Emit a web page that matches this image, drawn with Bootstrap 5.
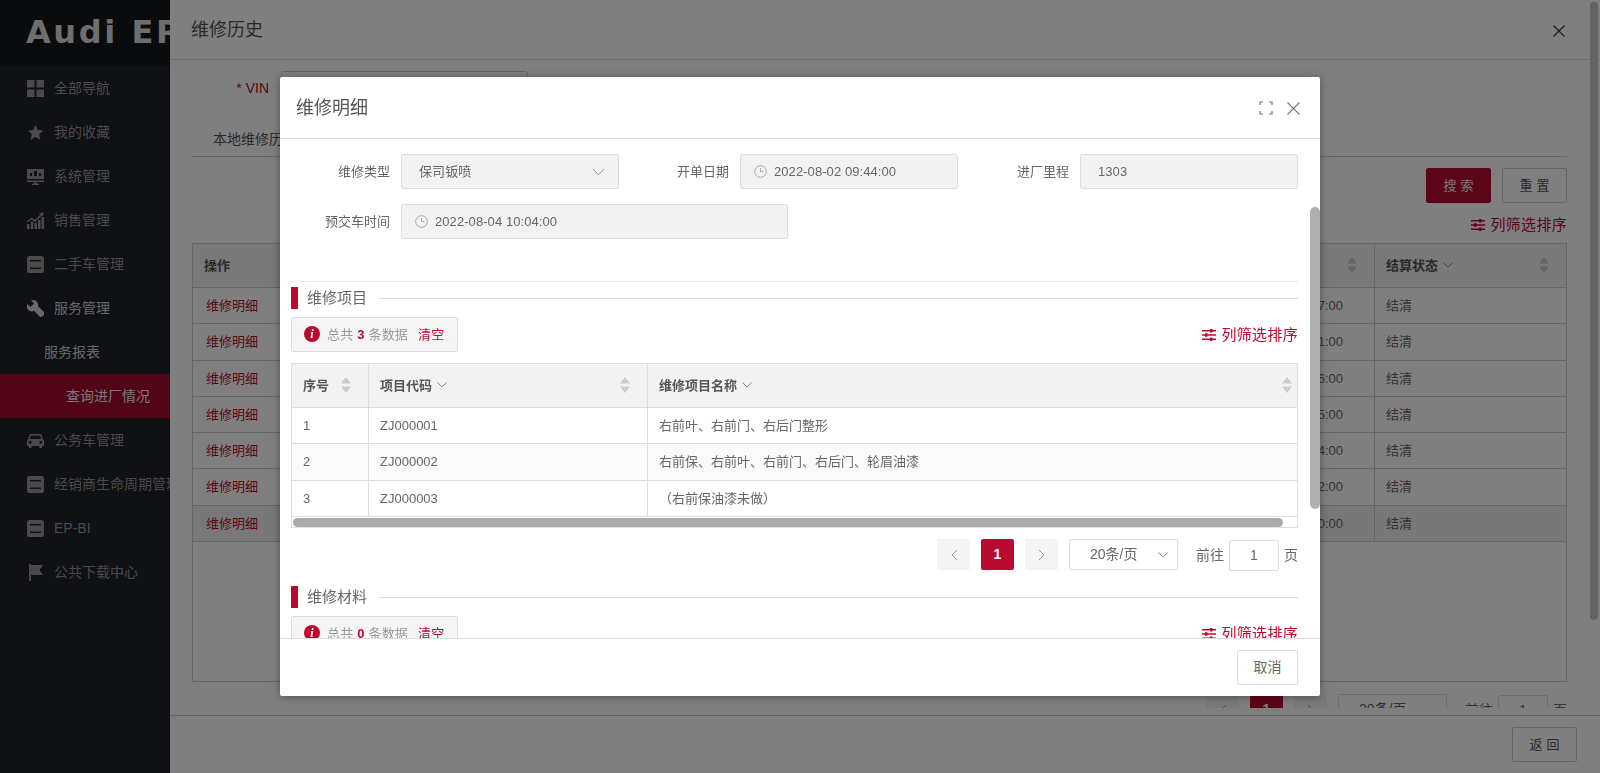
<!DOCTYPE html>
<html lang="zh-CN">
<head>
  <meta charset="UTF-8">
  <title>维修明细</title>
  <link href="https://cdn.jsdelivr.net/npm/bootstrap@5.3.0/dist/css/bootstrap.min.css" rel="stylesheet">
  <style>
    html, body { height: 100%; overflow: hidden; }
    body { font-family: "Liberation Sans", "Noto Sans CJK SC", sans-serif; font-size: 13px; color: #666; background: #fff; }

    /* page behind the mask */
    .side-bar { width: 170px; flex: none; background: #1e2228; color: #959595; overflow: hidden; white-space: nowrap; font-size: 14px; }
    .side-logo { height: 66px; background: #14161a; color: #dcdcdc; font-family: "DejaVu Sans", sans-serif; font-weight: 700; font-size: 32px; letter-spacing: 2.6px; padding: 13px 0 0 26px; line-height: 38px; }
    .side-item { height: 44px; padding-left: 27px; display: flex; align-items: center; gap: 10px; }
    .side-item svg { width: 17px; height: 17px; flex: none; fill: #959595; }
    .side-open { color: #d0d0d0; }
    .side-open svg { fill: #d0d0d0; }
    .side-sub { height: 44px; padding-left: 44px; display: flex; align-items: center; color: #d0d0d0; }
    .side-active { height: 44px; padding-left: 66px; display: flex; align-items: center; background: #a20a2c; color: #f0f0f0; }

    .drawer-pane { min-width: 0; }
    .drawer-head { height: 60px; flex: none; border-bottom: 1px solid #ddd; padding: 2px 35px 0 21px; font-size: 18px; color: #555; }
    .drawer-body { padding: 11px 33px 0 22px; overflow: hidden; min-height: 0; }
    .vin-label { width: 77px; text-align: right; color: #bb0a30; font-size: 14px; }
    .vin-input { width: 247px; height: 34px; margin-left: 12px; border: 1px solid #ccc; border-radius: 3px; background: #fff; }
    .tab-strip { height: 52px; border-bottom: 1px solid #ccc; padding: 24px 0 0 21px; font-size: 14px; line-height: 20px; color: #555; }
    .act-row { margin-top: 11px; }
    .act-btn { height: 35px; width: 65px; border-radius: 2px; font-size: 13px; letter-spacing: 4px; padding: 0 0 0 4px; }
    .act-red { background: #bb0a30; color: #eee; border: 1px solid #bb0a30; margin-right: 3px; }
    .act-plain { background: #fff; color: #555; border: 1px solid #ccc; }
    .col-filter { color: #bb0a30; font-size: 15px; letter-spacing: .3px; line-height: 20px; white-space: nowrap; }
    .col-filter svg { width: 14px; height: 12px; margin-right: 5px; vertical-align: -1px; }
    .back-box { height: 439px; flex: none; border: 1px solid #ccc; border-top: 0; margin-top: 8px; }
    .grid-table { table-layout: fixed; margin: 0 -1px; border-collapse: collapse; width: calc(100% + 2px); font-size: 13px; }
    .grid-table > :not(caption) > * > * { padding: 0 11px; vertical-align: middle; border: 1px solid #ddd; color: #666; background: #fff; box-shadow: none; white-space: nowrap; overflow: hidden; }
    .grid-table thead th { background: #f2f2f2; color: #555; font-weight: 700; position: relative; height: 44px; }
    .grid-table tbody tr { height: 36px; }
    .grid-table tbody tr.row-tall { height: 37px; }
    .grid-table tbody tr.row-stripe td { background: #fafafa; }
    .grid-table tbody tr.row-hover td { background: #f0f0f0; }
    .grid-back > :not(caption) > * > * { border-color: #ccc; }
    .grid-back a { color: #bb0a30; text-decoration: none; }
    .grid-back td:first-child { padding-left: 13px; }
    .grid-back td.time-cell { padding-right: 31px; text-align: right; }
    .sort-mark { position: absolute; top: 13px; right: 17px; width: 10px; height: 16px; fill: #ccc; }
    .sort-end { right: 5px; }
    .drop-mark { width: 10px; height: 6px; margin-left: 1px; vertical-align: 2px; stroke: #888; fill: none; }
    .back-pager { height: 14px; flex: none; margin-top: 12px; overflow: hidden; }
    .drawer-foot { height: 58px; flex: none; border-top: 1px solid #ccc; padding: 0 23px 0 0; }

    .drawer-bar { position: absolute; top: 2px; right: 2px; width: 8px; height: 618px; background: #c4c4c4; border-radius: 4px; }

    /* dialog on top of the mask */
    .detail-modal { position: absolute; left: 280px; top: 77px; width: 1040px; height: 619px; z-index: 1060; background: #fff; border: 0; border-radius: 2px; box-shadow: 0 1px 10px rgba(0,0,0,.35); color: #666; }
    .detail-head { height: 62px; flex: none; padding: 1px 20px 0 16px; border-bottom: 1px solid #ddd; border-radius: 0; font-size: 18px; color: #555; }
    .head-tools { gap: 14px; }
    .detail-body { flex: 1 1 auto; height: 499px; padding: 15px 22px 0 11px; overflow: hidden; position: relative; }
    .detail-foot { height: 58px; flex: none; padding: 0 22px 0 0; border-top: 1px solid #ddd; border-radius: 0; justify-content: flex-end; margin: 0; }
    .detail-foot > * { margin: 0; }
    .cancel-btn { width: 61px; height: 35px; padding: 0; background: #fff; border: 1px solid #ddd; border-radius: 2px; color: #666; font-size: 14px; }
    .head-icon { stroke: #777; fill: none; }

    .field-grid { display: grid; grid-template-columns: 110px 218px 121px 218px 122px 218px; row-gap: 15px; align-items: center; }
    .field-label { padding-right: 11px; text-align: right; color: #666; }
    .field-box { height: 35px; display: flex; align-items: center; padding-left: 17px; background: #f2f2f2; border: 1px solid #ddd; border-radius: 2px; color: #666; white-space: nowrap; letter-spacing: .07px; }
    .field-date { padding-left: 13px; gap: 7px; }
    .field-wide { grid-column: span 3; width: 387px; }
    .clock-mark { width: 13px; height: 13px; stroke: #aaa; fill: none; flex: none; }
    .field-select { justify-content: space-between; padding-right: 13px; }
    .chev-mark { width: 13px; height: 8px; stroke: #999; fill: none; }
    .top-rule { margin-top: 42px; border-top: 1px solid #e8e8e8; }
    .sect-head { height: 22px; margin-top: 5px; display: flex; align-items: center; font-size: 15px; color: #666; }
    .sect-head::before { content: ""; width: 7px; height: 22px; background: #bb0a30; margin-right: 9px; }
    .sect-line { flex: 1; margin-left: 12px; border-top: 1px solid #ddd; }
    .sect-next { margin-top: 15px; }
    .tool-row { margin-top: 8px; height: 34px; }
    .tool-row .col-filter { padding-top: 2px; }
    .info-box { width: 167px; height: 35px; padding-left: 12px; background: #f5f5f5; border: 1px solid #ddd; border-radius: 2px; color: #999; gap: 7px; white-space: nowrap; letter-spacing: .2px; }
    .info-box span { padding-top: 2px; }
    .info-box b { color: #bb0a30; }
    .info-box a { color: #bb0a30; text-decoration: none; margin-left: 10px; }
    .info-mark { width: 16px; height: 16px; flex: none; }
    .info-mark text { font-family: "Liberation Serif", serif; font-style: italic; font-weight: 700; font-size: 12px; fill: #fff; }
    .table-frame { height: 165px; margin-top: 12px; border: 1px solid #ddd; border-top: 0; position: relative; }
    .table-thumb { position: absolute; left: 1px; bottom: 0; width: 990px; height: 9px; background: #aaa; border-radius: 5px; }
    .pager-row { margin-top: 11px; height: 32px; }
    .pg-btn { width: 33px; height: 31px; border: 0; border-radius: 2px; background: #f4f4f4; padding: 0; margin-right: 11px; display: flex; align-items: center; justify-content: center; }
    .pg-btn svg { width: 8px; height: 12px; stroke: #999; fill: none; }
    .pg-on { background: #bb0a30; color: #fff; font-weight: 700; font-size: 14px; }
    .pg-size { width: 109px; height: 31px; border: 1px solid #ddd; border-radius: 2px; padding: 0 9px 0 20px; font-size: 14px; }
    .pg-goto { margin-left: 18px; font-size: 14px; gap: 5px; }
    .pg-num { width: 50px; height: 31px; border: 1px solid #ddd; border-radius: 2px; padding: 0; text-align: center; font-size: 14px; color: #666; }
    .body-bar { position: absolute; top: 68px; right: 0; width: 10px; height: 302px; background: #b0b0b0; border-radius: 5px; }
  </style>
</head>
<body>
  <svg width="0" height="0" class="d-block position-absolute">
    <symbol id="i-sort" viewBox="0 0 10 16"><path d="M5 0l5 6.500H0zM5 16l5-6.500H0z"/></symbol>
    <symbol id="i-drop" viewBox="0 0 10 6"><path d="M.5.5L5 5 9.500.5"/></symbol>
    <symbol id="i-clock" viewBox="0 0 13 13"><circle cx="6.500" cy="6.500" r="5.800"/><path d="M6.500 3v3.700h3"/></symbol>
    <symbol id="i-sliders" viewBox="0 0 14 12"><path fill="#bb0a30" d="M0 1h14v1.500H0zM0 5.300h14v1.500H0zM0 9.500h14V11H0zM8 0h2.500v3.500H8zM3 4.300h2.500v3.500H3zM8 8.500h2.500V12H8z"/></symbol>
    <symbol id="i-note" viewBox="0 0 17 17"><path fill-rule="evenodd" d="M2.500 0h12A2.500 2.500 0 0 1 17 2.500v12a2.500 2.500 0 0 1-2.500 2.500h-12A2.500 2.500 0 0 1 0 14.500v-12A2.500 2.500 0 0 1 2.500 0zM3 4v1.500h11V4zM3 11.500V13h11v-1.500z"/></symbol>
  </svg>

  <div class="d-flex h-100 position-relative">
    <aside class="side-bar">
      <div class="side-logo">Audi EP</div>
      <div class="side-item"><svg viewBox="0 0 17 17"><path d="M0 0h7.500v7.500H0zM9.500 0H17v7.500H9.500zM0 9.500h7.500V17H0zM9.500 9.500H17V17H9.500z"/></svg>全部导航</div>
      <div class="side-item"><svg viewBox="0 0 17 17"><path d="M8.500 1l2.300 5 5.400.6-4 3.700 1.100 5.400-4.800-2.700-4.800 2.700 1.100-5.400-4-3.700 5.400-.6z"/></svg>我的收藏</div>
      <div class="side-item"><svg viewBox="0 0 17 17"><path fill-rule="evenodd" d="M0 1h17v10H0zM3 8h2V5H3zM7 8h3V3H7zM12 8h2V5h-2zM0 12.500h17V14h-7.500v1.500H12V17H5v-1.500h2.500V14H0z"/></svg>系统管理</div>
      <div class="side-item"><svg viewBox="0 0 17 17"><path d="M0 12h2.500v5H0zM3.800 9.500h2.500V17H3.800zM7.500 11h2.500v6H7.500zM11 8h2.500v9H11zM14.500 5H17v12h-2.500zM0 9.500l4.500-4 3.500 2.500 5.500-5.500-1.500-1L16.500 0l-.2 4.500-1.300-1-7 6.500-3.500-2.500L.7 10.500z"/></svg>销售管理</div>
      <div class="side-item"><svg><use href="#i-note"/></svg>二手车管理</div>
      <div class="side-item side-open"><svg viewBox="0 0 17 17"><path transform="matrix(-1 0 0 1 17 0)" d="M11 0a5 5 0 0 0-5 6.300L.5 11.500a2.800 2.800 0 0 0 0 3.900l.6.600a2.800 2.800 0 0 0 3.900 0l5-5.200A5 5 0 0 0 16.700 4l-3.200 3L10 3.600 13 .5A5 5 0 0 0 11 0z"/></svg>服务管理</div>
      <div class="side-sub">服务报表</div>
      <div class="side-active">查询进厂情况</div>
      <div class="side-item"><svg viewBox="0 0 17 17"><path fill-rule="evenodd" d="M3 2h11l2 5.500c.7.400 1 1 1 1.700V14h-2v2h-2.500v-2h-8v2H2v-2H0V9.200c0-.7.300-1.300 1-1.700zM4 3.500L2.800 7h11.400L13 3.500zM3.200 8.800a1.500 1.500 0 1 0 0 3 1.500 1.500 0 0 0 0-3zM13.800 8.800a1.500 1.500 0 1 0 0 3 1.500 1.500 0 0 0 0-3z"/></svg>公务车管理</div>
      <div class="side-item"><svg><use href="#i-note"/></svg>经销商生命周期管理</div>
      <div class="side-item"><svg><use href="#i-note"/></svg>EP-BI</div>
      <div class="side-item"><svg viewBox="0 0 17 17"><path d="M2 0h2v17H2zM4 1h12l-3.500 5 3.500 5H4z"/></svg>公共下载中心</div>
    </aside>

    <main class="drawer-pane flex-grow-1 d-flex flex-column">
      <header class="drawer-head d-flex align-items-center justify-content-between">
        <span>维修历史</span>
        <svg width="12" height="12" viewBox="0 0 12 12" stroke="#333" stroke-width="1.100"><path d="M.5.5l11 11M11.500.5l-11 11"/></svg>
      </header>
      <div class="drawer-body flex-grow-1 d-flex flex-column">
        <div class="d-flex align-items-center">
          <span class="vin-label">* VIN</span>
          <div class="vin-input"></div>
        </div>
        <div class="tab-strip">本地维修历史</div>
        <div class="act-row d-flex justify-content-end gap-2">
          <button class="act-btn act-red" type="button">搜索</button>
          <button class="act-btn act-plain" type="button">重置</button>
        </div>
        <div class="col-filter text-end mt-2 pt-1"><svg><use href="#i-sliders"/></svg>列筛选排序</div>
        <div class="back-box">
          <table class="grid-table grid-back">
            <colgroup><col style="width:110px"><col><col style="width:192px"></colgroup>
            <thead>
              <tr><th>操作</th><th><svg class="sort-mark"><use href="#i-sort"/></svg></th><th>结算状态 <svg class="drop-mark"><use href="#i-drop"/></svg><svg class="sort-mark"><use href="#i-sort"/></svg></th></tr>
            </thead>
            <tbody>
              <tr><td><a href="#">维修明细</a></td><td class="time-cell">17:00</td><td>结清</td></tr>
              <tr class="row-tall"><td><a href="#">维修明细</a></td><td class="time-cell">11:00</td><td>结清</td></tr>
              <tr><td><a href="#">维修明细</a></td><td class="time-cell">16:00</td><td>结清</td></tr>
              <tr><td><a href="#">维修明细</a></td><td class="time-cell">15:00</td><td>结清</td></tr>
              <tr><td><a href="#">维修明细</a></td><td class="time-cell">14:00</td><td>结清</td></tr>
              <tr class="row-tall"><td><a href="#">维修明细</a></td><td class="time-cell">12:00</td><td>结清</td></tr>
              <tr class="row-hover"><td><a href="#">维修明细</a></td><td class="time-cell">10:00</td><td>结清</td></tr>
            </tbody>
          </table>
        </div>
        <div class="back-pager d-flex justify-content-end">
          <div class="pager-row d-flex mt-0">
            <button class="pg-btn" type="button"><svg viewBox="0 0 8 12"><path d="M7 1L2 6l5 5"/></svg></button>
            <button class="pg-btn pg-on" type="button">1</button>
            <button class="pg-btn" type="button"><svg viewBox="0 0 8 12"><path d="M1 1l5 5-5 5"/></svg></button>
            <div class="pg-size d-flex align-items-center justify-content-between"><span>20条/页</span></div>
            <div class="pg-goto d-flex align-items-center"><span>前往</span><input class="pg-num" value="1" readonly><span>页</span></div>
          </div>
        </div>
      </div>
      <footer class="drawer-foot d-flex align-items-center justify-content-end">
        <button class="act-btn act-plain" type="button">返回</button>
      </footer>
    </main>
    <div class="drawer-bar"></div>
  </div>

  <div class="modal-backdrop show"></div>

  <div class="modal-content detail-modal">
    <div class="modal-header detail-head">
      <span>维修明细</span>
      <span class="head-tools d-flex align-items-center">
        <svg class="head-icon" width="14" height="14" viewBox="0 0 14 14" stroke-width="1.200"><path d="M4 1H1v3M10 1h3v3M4 13H1v-3M10 13h3v-3"/></svg>
        <svg class="head-icon" width="13" height="13" viewBox="0 0 13 13" stroke-width="1.100"><path d="M.5.5l12 12M12.500.5l-12 12"/></svg>
      </span>
    </div>
    <div class="modal-body detail-body">
      <div class="field-grid">
        <span class="field-label">维修类型</span>
        <div class="field-box field-select"><span>保司钣喷</span><svg class="chev-mark" viewBox="0 0 13 8"><path d="M1 1l5.500 6L12 1"/></svg></div>
        <span class="field-label">开单日期</span>
        <div class="field-box field-date"><svg class="clock-mark"><use href="#i-clock"/></svg>2022-08-02 09:44:00</div>
        <span class="field-label">进厂里程</span>
        <div class="field-box">1303</div>
        <span class="field-label">预交车时间</span>
        <div class="field-box field-date field-wide"><svg class="clock-mark"><use href="#i-clock"/></svg>2022-08-04 10:04:00</div>
      </div>
      <div class="top-rule"></div>

      <div class="sect-head"><span>维修项目</span><span class="sect-line"></span></div>
      <div class="tool-row d-flex justify-content-between align-items-center">
        <div class="info-box d-flex align-items-center">
          <svg class="info-mark" viewBox="0 0 16 16"><circle cx="8" cy="8" r="8" fill="#bb0a30"/><text x="8" y="12" text-anchor="middle">i</text></svg>
          <span>总共 <b>3</b> 条数据<a href="#">清空</a></span>
        </div>
        <div class="col-filter"><svg><use href="#i-sliders"/></svg>列筛选排序</div>
      </div>
      <div class="table-frame">
        <table class="grid-table">
          <colgroup><col style="width:77px"><col style="width:279px"><col></colgroup>
          <thead>
            <tr>
              <th>序号<svg class="sort-mark"><use href="#i-sort"/></svg></th>
              <th>项目代码 <svg class="drop-mark"><use href="#i-drop"/></svg><svg class="sort-mark"><use href="#i-sort"/></svg></th>
              <th>维修项目名称 <svg class="drop-mark"><use href="#i-drop"/></svg><svg class="sort-mark sort-end"><use href="#i-sort"/></svg></th>
            </tr>
          </thead>
          <tbody>
            <tr><td>1</td><td>ZJ000001</td><td>右前叶、右前门、右后门整形</td></tr>
            <tr class="row-tall row-stripe"><td>2</td><td>ZJ000002</td><td>右前保、右前叶、右前门、右后门、轮眉油漆</td></tr>
            <tr><td>3</td><td>ZJ000003</td><td>（右前保油漆未做）</td></tr>
          </tbody>
        </table>
        <div class="table-thumb"></div>
      </div>
      <div class="pager-row d-flex justify-content-end">
        <button class="pg-btn" type="button"><svg viewBox="0 0 8 12"><path d="M7 1L2 6l5 5"/></svg></button>
        <button class="pg-btn pg-on" type="button">1</button>
        <button class="pg-btn" type="button"><svg viewBox="0 0 8 12"><path d="M1 1l5 5-5 5"/></svg></button>
        <div class="pg-size d-flex align-items-center justify-content-between"><span>20条/页</span><svg class="drop-mark m-0"><use href="#i-drop"/></svg></div>
        <div class="pg-goto d-flex align-items-center"><span>前往</span><input class="pg-num" value="1" readonly><span>页</span></div>
      </div>

      <div class="sect-head sect-next"><span>维修材料</span><span class="sect-line"></span></div>
      <div class="tool-row d-flex justify-content-between align-items-center">
        <div class="info-box d-flex align-items-center">
          <svg class="info-mark" viewBox="0 0 16 16"><circle cx="8" cy="8" r="8" fill="#bb0a30"/><text x="8" y="12" text-anchor="middle">i</text></svg>
          <span>总共 <b>0</b> 条数据<a href="#">清空</a></span>
        </div>
        <div class="col-filter"><svg><use href="#i-sliders"/></svg>列筛选排序</div>
      </div>
      <div class="body-bar"></div>
    </div>
    <div class="modal-footer detail-foot">
      <button class="cancel-btn" type="button">取消</button>
    </div>
  </div>

  <script src="https://cdn.jsdelivr.net/npm/bootstrap@5.3.0/dist/js/bootstrap.bundle.min.js"></script>
</body>
</html>
